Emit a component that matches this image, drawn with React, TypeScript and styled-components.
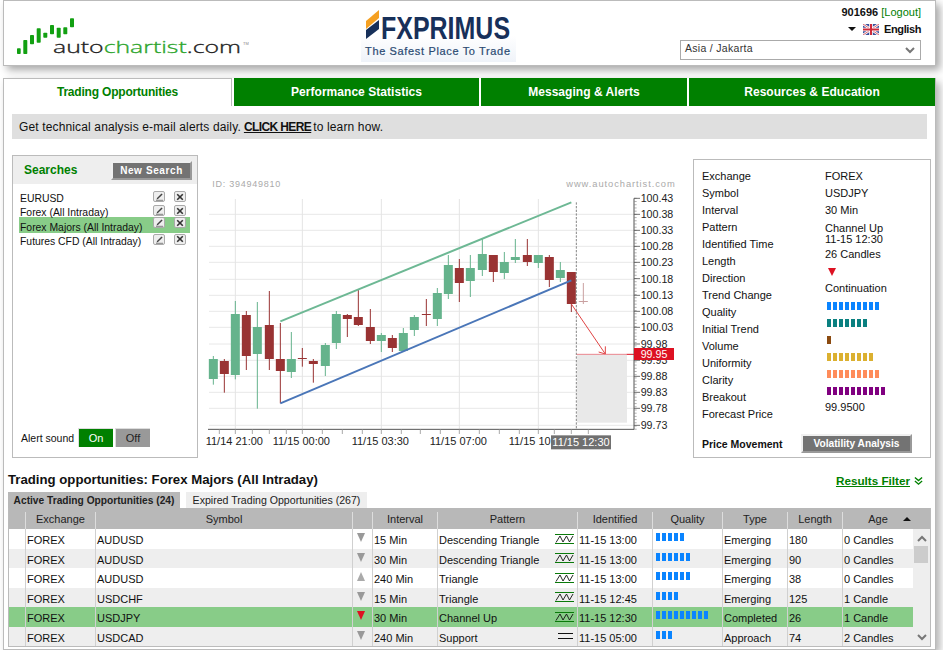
import React from 'react';
import styled, { createGlobalStyle } from 'styled-components';

const GlobalStyle = createGlobalStyle`
  html, body {
    margin: 0;
    padding: 0;
    background: #ffffff;
    overflow: hidden;
  }
  body {
    font-family: 'Liberation Sans', Arial, sans-serif;
    font-size: 11px;
    color: #111111;
  }
`;

const Page = styled.div`
  width: 933px;
  margin-left: 3px;
`;

// header
const Header = styled.header`
  height: 66px;
  box-sizing: border-box;
  border: 1px solid #bbbbbb;
  box-shadow: 4px 4px 8px rgba(0, 0, 0, 0.35);
  display: flex;
  background: #fff;
`;

const LogoSlot = styled.div`
  width: 357px;
  flex: none;
`;

const PartnerSlot = styled.div`
  width: 157px;
  flex: none;
`;

const Account = styled.div`
  flex: 1;
  display: flex;
  flex-direction: column;
  align-items: flex-end;
  padding: 5px 14px 0 0;
`;

const UserLine = styled.div`
  font-weight: bold;
  font-size: 11px;
  line-height: 13px;
  color: #111;
`;

const LogoutLink = styled.a`
  color: #008000;
  margin-left: 0;
  font-weight: normal;
`;

const LangLine = styled.div`
  display: flex;
  align-items: center;
  margin-top: 3px;
  height: 14px;
  font-weight: bold;
  font-size: 11px;
  letter-spacing: -0.4px;
`;

const DownCaret = styled.span`
  width: 0;
  height: 0;
  border-left: 4px solid transparent;
  border-right: 4px solid transparent;
  border-top: 4px solid #111;
  margin-right: 7px;
`;

const ZoneSelect = styled.div`
  width: 241px;
  height: 20px;
  box-sizing: border-box;
  margin-top: 4px;
  border: 1px solid #aaaaaa;
  display: flex;
  align-items: center;
  justify-content: space-between;
  padding: 0 5px 5px 4px;
  font-size: 10.5px;
  letter-spacing: 0.3px;
  color: #333;
`;

const ZoneChevron = styled.span`
  display: flex;
  margin-top: 6px;
`;

// main panel
const Main = styled.main`
  margin-top: 12px;
  height: 572px;
  box-sizing: border-box;
  border-left: 1px solid #bbbbbb;
  border-right: 1px solid #bbbbbb;
  border-bottom: 1px solid #bbbbbb;
  box-shadow: 4px 4px 8px rgba(0, 0, 0, 0.3);
`;

const NavBar = styled.nav`
  display: flex;
  height: 28px;
`;

const NavTab = styled.div<{ $width: number; $active?: boolean }>`
  width: ${p => p.$width}px;
  margin-right: 2px;
  box-sizing: border-box;
  display: flex;
  align-items: center;
  justify-content: center;
  font-size: 12px;
  font-weight: bold;
  background: ${p => (p.$active ? '#ffffff' : '#008000')};
  color: ${p => (p.$active ? '#008000' : '#ffffff')};
  border-top: ${p => (p.$active ? '1px solid #bbbbbb' : 'none')};
  border-right: ${p => (p.$active ? '1px solid #bbbbbb' : 'none')};
  padding-bottom: ${p => (p.$active ? '1px' : '0')};
  letter-spacing: ${p => (p.$active ? '-0.2px' : '0.04px')};
  &:last-child {
    margin-right: 0;
  }
`;

const Content = styled.div`
  padding: 8px 0 0 8px;
`;

const Banner = styled.div`
  width: 915px;
  height: 25px;
  background: #dfdfdf;
  display: flex;
  align-items: center;
  padding-left: 7px;
  box-sizing: border-box;
  font-size: 12px;
  letter-spacing: 0.14px;
  color: #111;
`;

const BannerLink = styled.a`
  font-weight: bold;
  text-decoration: underline;
  letter-spacing: -0.6px;
  color: #111;
  margin: 0 2px 0 3px;
`;

const MidRow = styled.div`
  display: flex;
  margin-top: 16px;
  height: 303px;
`;

// searches
const SearchPanel = styled.section`
  width: 186px;
  flex: none;
  box-sizing: border-box;
  border: 1px solid #bbbbbb;
  display: flex;
  flex-direction: column;
`;

const SearchHead = styled.div`
  height: 28px;
  background: #eeeeee;
  display: flex;
  align-items: center;
  justify-content: space-between;
  padding: 0 5px 0 11px;
  flex: none;
`;

const SearchTitle = styled.span`
  color: #008000;
  font-weight: bold;
  font-size: 12px;
`;

const GreyButton = styled.div<{ $width: number; $spaced?: boolean }>`
  width: ${p => p.$width}px;
  height: 19px;
  box-sizing: border-box;
  background: #737373;
  color: #ffffff;
  font-weight: bold;
  font-size: ${p => (p.$spaced ? '10px' : '10.2px')};
  letter-spacing: ${p => (p.$spaced ? '0.6px' : '0')};
  display: flex;
  align-items: center;
  justify-content: center;
  border: 2px solid;
  border-color: #f0f0f0 #999999 #999999 #f0f0f0;
`;

const SearchList = styled.div`
  padding: 7px 7px 0 6px;
  flex: 1;
`;

const SearchRow = styled.div<{ $active?: boolean }>`
  height: ${p => (p.$active ? '16px' : '14.3px')};
  margin: ${p => (p.$active ? '-2.6px 0 0.9px' : '0')};
  background: ${p => (p.$active ? '#88cc88' : 'transparent')};
  display: flex;
  align-items: ${p => (p.$active ? 'flex-end' : 'center')};
  padding-left: 1px;
  font-size: 10.4px;
`;

const SearchName = styled.span`
  flex: 1;
  white-space: nowrap;
`;

const RowButton = styled.span<{ $gap?: boolean }>`
  width: 12px;
  height: 11px;
  box-sizing: border-box;
  border: 1px solid #aaaaaa;
  border-radius: 2px;
  background: #eeeeee;
  display: flex;
  align-items: center;
  justify-content: center;
  margin-left: ${p => (p.$gap ? '9px' : '0')};
  margin-right: ${p => (p.$gap ? '4px' : '0')};
  align-self: flex-start;
`;

const SoundRow = styled.div`
  display: flex;
  align-items: center;
  padding: 0 0 10px 8px;
  font-size: 10.5px;
`;

const SoundLabel = styled.span`
  width: 57px;
`;

const SoundToggle = styled.span<{ $on?: boolean }>`
  width: 35px;
  height: 19px;
  box-sizing: border-box;
  margin-right: 2px;
  font-size: 11px;
  background: ${p => (p.$on ? '#008000' : '#999999')};
  color: ${p => (p.$on ? '#ffffff' : '#222222')};
  display: flex;
  align-items: center;
  justify-content: center;
  border-top: 1px solid #dddddd;
  border-left: 1px solid #dddddd;
`;

// chart
const ChartBox = styled.div`
  width: 490px;
  height: 290px;
  margin: 15px 3px 0 2px;
  flex: none;
  svg {
    display: block;
  }
`;

// info panel
const InfoPanel = styled.section`
  width: 238px;
  height: 299px;
  margin-top: 4px;
  flex: none;
  box-sizing: border-box;
  border: 1px solid #bbbbbb;
  padding: 8px 0 4px 8px;
  display: flex;
  flex-direction: column;
  font-size: 11px;
`;

const InfoColumns = styled.div`
  display: grid;
  grid-template-columns: 123px 1fr;
`;

const InfoLine = styled.div<{ $tight?: boolean; $before?: number }>`
  height: ${p => (p.$tight ? '10.5px' : '17px')};
  line-height: ${p => (p.$tight ? '10.5px' : '17px')};
  margin-top: ${p => p.$before || 0}px;
  display: flex;
  align-items: center;
  white-space: nowrap;
`;

const Direction = styled.span`
  width: 0;
  height: 0;
  margin-left: 3px;
  border-left: 4.5px solid transparent;
  border-right: 4.5px solid transparent;
  border-top: 8px solid #dd1122;
`;

const Meter = styled.span<{ $left?: number }>`
  display: flex;
  gap: 2px;
  margin-left: ${p => p.$left || 0}px;
`;

const MeterSeg = styled.i<{ $color: string }>`
  width: 4px;
  height: 8px;
  background: ${p => p.$color};
`;

const MoveRow = styled.div`
  margin-top: auto;
  display: flex;
  align-items: center;
  justify-content: space-between;
  padding-right: 18px;
`;

const MoveLabel = styled.span`
  font-weight: bold;
  font-size: 10.5px;
`;

// opportunities
const TitleRow = styled.div`
  display: flex;
  align-items: flex-end;
  justify-content: space-between;
  margin: 12px 0 0 -4px;
  width: 915px;
  height: 18px;
`;

const SectionTitle = styled.h2`
  margin: 0;
  font-size: 13.2px;
  line-height: 17px;
  font-weight: bold;
  color: #111;
`;

const FilterLink = styled.a`
  display: flex;
  align-items: center;
  gap: 4px;
  padding-bottom: 1px;
  font-size: 11.7px;
  font-weight: bold;
  color: #008000;
  span {
    text-decoration: underline;
  }
`;

const SubTabs = styled.div`
  display: flex;
  gap: 6px;
  margin: 4px 0 0 -4px;
  height: 16px;
`;

const SubTab = styled.div<{ $active?: boolean; $width: number }>`
  width: ${p => p.$width}px;
  background: ${p => (p.$active ? '#b8b8b8' : '#eeeeee')};
  font-weight: ${p => (p.$active ? 'bold' : 'normal')};
  color: #222;
  font-size: ${p => (p.$active ? '10.2px' : '10.6px')};
  display: flex;
  align-items: center;
  justify-content: center;
`;

const Table = styled.div`
  margin-left: -4px;
  width: 923px;
  box-sizing: border-box;
  border: 1px solid #bbbbbb;
  border-top: none;
`;

const COLS = '17px 70px 257px 20px 65px 140px 75px 70px 65px 55px 70px';

const HeadRow = styled.div`
  display: grid;
  grid-template-columns: ${COLS} 18px;
  height: 21px;
  background: #b8b8b8;
  padding-top: 4px;
  box-sizing: border-box;
`;

const HeadCell = styled.div`
  position: relative;
  border-right: 1px solid #dddddd;
  display: flex;
  align-items: center;
  justify-content: center;
  color: #222;
  padding-bottom: 3px;
  &:nth-child(n + 11) {
    border-right: none;
  }
`;

const SortArrow = styled.span`
  position: absolute;
  right: 2px;
  top: 5px;
  width: 0;
  height: 0;
  border-left: 4px solid transparent;
  border-right: 4px solid transparent;
  border-bottom: 4px solid #111;
`;

const TableBody = styled.div`
  display: flex;
`;

const Rows = styled.div`
  width: 904px;
  flex: none;
`;

const Row = styled.div<{ $bg: string }>`
  display: grid;
  grid-template-columns: ${COLS};
  height: 19.5px;
  background: ${p => p.$bg};
`;

const Cell = styled.div`
  box-sizing: border-box;
  border-right: 1px solid #d0d0d0;
  padding: 3px 0 0 1px;
  display: flex;
  align-items: center;
  justify-content: space-between;
  white-space: nowrap;
  overflow: hidden;
  &:last-child {
    border-right: none;
  }
`;

const Arrow = styled.span<{ $dir: string; $color: string }>`
  width: 0;
  height: 0;
  margin: -5px 0 0 3px;
  border-left: 4.5px solid transparent;
  border-right: 4.5px solid transparent;
  ${p => (p.$dir === 'up' ? 'border-bottom' : 'border-top')}: 9px solid ${p => p.$color};
`;

const RowMeter = styled.span`
  align-self: flex-start;
  margin-top: 1px;
`;

const ScrollBar = styled.div`
  flex: 1;
  background: #eeeeee;
  display: flex;
  flex-direction: column;
  align-items: center;
  justify-content: space-between;
  position: relative;
  padding: 6px 0 5px;
`;

const ScrollThumb = styled.div`
  position: absolute;
  left: 1px;
  right: 2px;
  top: 17px;
  height: 17px;
  background: #cccccc;
`;

const Chevron = ({ up, color = '#777777', size = 10 }: { up?: boolean; color?: string; size?: number }) => (
  <svg width={size} height={size * 0.7} viewBox="0 0 10 7" fill="none" stroke={color} strokeWidth="2">
    <path d={up ? 'M1 6 L5 2 L9 6' : 'M1 1 L5 5 L9 1'} />
  </svg>
);

const AutochartistLogo = () => (
  <svg width="245" height="64" viewBox="0 0 245 64">
    <g fill="#12a012">
      <rect x="13" y="47.3" width="3.7" height="5.7" rx="0.8" />
      <rect x="19.3" y="39" width="4" height="14" rx="0.8" />
      <rect x="26" y="34" width="4" height="9.3" rx="0.8" />
      <rect x="32.7" y="27.3" width="4" height="14.4" rx="0.8" />
      <rect x="39.3" y="31.7" width="4" height="5" rx="0.8" />
      <rect x="46" y="24" width="4" height="9.3" rx="0.8" />
      <rect x="52.7" y="26.7" width="4" height="10" rx="0.8" />
      <rect x="59.3" y="26.3" width="4" height="7" rx="0.8" />
      <rect x="66" y="17.3" width="4" height="9" rx="0.8" />
    </g>
    <text
      x="49"
      y="52"
      fontFamily="'Open Sans', sans-serif"
      fontSize="16"
      fontWeight="300"
      textLength="188"
      lengthAdjust="spacingAndGlyphs"
      fill="#222222"
      stroke="#222222"
      strokeWidth="0.3"
    >
      auto
      <tspan fill="#2ca52c" stroke="#2ca52c">chartist</tspan>
      .com
    </text>
    <text x="239" y="44" fontFamily="'Liberation Sans', sans-serif" fontSize="4" fill="#888888">TM</text>
  </svg>
);

const PrimusLogo = () => (
  <svg width="157" height="64" viewBox="0 0 157 64">
    <defs>
      <linearGradient id="fade" x1="0" y1="0" x2="0" y2="1">
        <stop offset="0" stopColor="#ffffff" />
        <stop offset="0.5" stopColor="#ffffff" />
        <stop offset="1" stopColor="#eff3f9" />
      </linearGradient>
    </defs>
    <rect x="0" y="8" width="155" height="53" fill="url(#fade)" />
    <path d="M5 20 L18 9 L18 17 L5 28 Z" fill="#f5a021" />
    <path d="M5 29 L18 19 L18 28 L5 38 Z" fill="#17305a" />
    <text
      transform="translate(20 38) scale(0.806 1)"
      fontFamily="'Liberation Sans', sans-serif"
      fontSize="31"
      fontWeight="bold"
      fill="#17305a"
    >
      FXPRIMUS
    </text>
    <text
      x="4"
      y="53.5"
      fontFamily="'Liberation Sans', sans-serif"
      fontSize="11"
      stroke="#2b4a72"
      strokeWidth="0.2"
      textLength="145"
      fill="#2b4a72"
    >
      The Safest Place To Trade
    </text>
  </svg>
);

const UkFlag = () => (
  <svg width="16" height="11" viewBox="0 0 16 11" style={{ marginRight: 5 }}>
    <rect width="16" height="11" fill="#3b4f9a" />
    <path d="M0 0 L16 11 M16 0 L0 11" stroke="#ffffff" strokeWidth="2.4" />
    <path d="M0 0 L16 11 M16 0 L0 11" stroke="#cf3a4a" strokeWidth="0.8" />
    <path d="M8 0 V11 M0 5.5 H16" stroke="#ffffff" strokeWidth="3.6" />
    <path d="M8 0 V11 M0 5.5 H16" stroke="#cf2a3a" strokeWidth="2" />
  </svg>
);

const EditIcon = () => (
  <svg width="9" height="9" viewBox="0 0 9 9">
    <path d="M2 6 L6.5 1.5 L7.6 2.6 L3 7 L1.6 7.4 Z" fill="#444444" />
    <path d="M1 8.3 H8" stroke="#666666" strokeWidth="0.8" />
  </svg>
);

const CloseIcon = () => (
  <svg width="8" height="8" viewBox="0 0 8 8">
    <path d="M1.2 1.2 L6.8 6.8 M6.8 1.2 L1.2 6.8" stroke="#333333" strokeWidth="1.6" />
  </svg>
);

const PatternIcon = ({ flat }: { flat?: boolean }) =>
  flat ? (
    <svg width="19" height="9" viewBox="0 0 19 9" style={{ marginRight: 3, marginTop: -3 }}>
      <path d="M3 1.5 H18 M3 6.5 H18" stroke="#111111" strokeWidth="1" />
    </svg>
  ) : (
    <svg width="19" height="10" viewBox="0 0 19 10" style={{ marginRight: 3, marginTop: -3 }}>
      <path d="M0 0.5 H19 M0 9.5 H19" stroke="#0a7a0a" strokeWidth="1" />
      <path d="M1 8.5 L5 2 L8 8 L11.5 2 L14.5 8 L18 2" stroke="#111111" strokeWidth="0.9" fill="none" />
    </svg>
  );

// chart drawn in 3x units, origin at page (200,170)
type Candle = [number, number, number, number, number, 'g' | 'r' | 'f'];

const candles: Candle[] = [
  [40, 567, 627, 558, 644, 'g'],
  [73, 573, 612, 567, 668, 'r'],
  [106, 432, 615, 393, 628, 'g'],
  [139, 435, 558, 423, 600, 'r'],
  [172, 471, 552, 396, 716, 'g'],
  [208, 465, 567, 363, 600, 'r'],
  [241, 567, 603, 459, 700, 'r'],
  [274, 567, 606, 486, 624, 'g'],
  [307, 564, 567, 534, 590, 'r'],
  [340, 573, 582, 567, 638, 'r'],
  [376, 525, 588, 519, 618, 'g'],
  [409, 432, 519, 423, 537, 'g'],
  [442, 435, 447, 432, 501, 'r'],
  [475, 441, 465, 358, 468, 'r'],
  [511, 471, 513, 417, 522, 'r'],
  [544, 495, 513, 489, 546, 'g'],
  [577, 504, 534, 495, 546, 'r'],
  [610, 489, 543, 474, 546, 'g'],
  [643, 441, 480, 435, 498, 'g'],
  [679, 432, 435, 387, 468, 'r'],
  [712, 369, 447, 354, 468, 'g'],
  [745, 285, 372, 255, 387, 'g'],
  [778, 294, 339, 267, 396, 'r'],
  [811, 294, 333, 255, 381, 'g'],
  [847, 252, 300, 207, 318, 'g'],
  [880, 255, 306, 255, 336, 'r'],
  [913, 276, 309, 246, 327, 'g'],
  [946, 261, 270, 207, 279, 'g'],
  [982, 255, 276, 207, 288, 'r'],
  [1015, 255, 279, 255, 294, 'g'],
  [1048, 261, 330, 255, 351, 'r'],
  [1081, 300, 324, 276, 336, 'g'],
  [1114, 306, 402, 306, 426, 'r'],
  [1150, 393, 396, 339, 402, 'f'],
];

const candleColor = { g: '#65b38c', r: '#993333', f: '#c9a0a0' };

const priceLabels: [string, number][] = [
  ['100.43', 85],
  ['100.38', 133],
  ['100.33', 181],
  ['100.28', 229],
  ['100.23', 277],
  ['100.18', 326],
  ['100.13', 376],
  ['100.08', 424],
  ['100.03', 472],
  ['99.98', 522],
  ['99.93', 571],
  ['99.88', 619],
  ['99.83', 667],
  ['99.78', 715],
  ['99.73', 766],
];

const gridY = [133, 181, 229, 277, 328, 376, 424, 472, 522, 571, 619, 667, 715, 766];
const gridX = [106, 307, 544, 778, 1015];
const tickX = [58, 106, 157, 208, 259, 307, 367, 427, 487, 544, 604, 661, 721, 778, 838, 898, 958, 1015, 1063, 1114, 1165];

const timeLabels: [string, number][] = [
  ['11/14 21:00', 103],
  ['11/15 00:00', 304],
  ['11/15 03:30', 541],
  ['11/15 07:00', 775],
  ['11/15 10:00', 1012],
];

const PriceChart = () => {
  const minor: number[] = [];
  for (let y = 85; y < 778; y += 9.62) minor.push(y);
  return (
    <svg width="490" height="290" viewBox="0 0 1470 870" fontFamily="'Liberation Sans', sans-serif">
      {gridY.map(y => (
        <line key={y} x1="27" x2="1302" y1={y} y2={y} stroke="#e8e8e8" strokeWidth="3" />
      ))}
      {gridX.map(x => (
        <line key={x} x1={x} x2={x} y1="87" y2="778" stroke="#e4e4e4" strokeWidth="3" />
      ))}
      <rect x="1131" y="553" width="150" height="205" fill="#e9e9e9" />
      {candles.map(([x, top, bottom, wt, wb, c]) => (
        <g key={x} fill={candleColor[c]}>
          <rect x={x - 1.5} y={wt} width="3" height={wb - wt} />
          <rect x={x - 13.5} y={top} width="27" height={bottom - top} />
        </g>
      ))}
      <line x1="241" y1="454" x2="1114" y2="97" stroke="#6db894" strokeWidth="6" />
      <line x1="241" y1="700" x2="1114" y2="331" stroke="#4a76b8" strokeWidth="6" />
      <line x1="1129" y1="97" x2="1129" y2="778" stroke="#666666" strokeWidth="2.4" strokeDasharray="7 4" />
      <path d="M1114 402 L1216 552 M1216 552 L1216 529 M1216 552 L1196 546" fill="none" stroke="#e04444" strokeWidth="3" />
      <line x1="1130" y1="553" x2="1280" y2="553" stroke="#e8707a" strokeWidth="2.5" />
      <line x1="1280" y1="553" x2="1302" y2="553" stroke="#dd1122" strokeWidth="3" />
      <line x1="24" x2="1302" y1="778" y2="778" stroke="#555555" strokeWidth="3" />
      <line x1="1302" x2="1302" y1="85" y2="778" stroke="#555555" strokeWidth="3" />
      {tickX.map(x => (
        <line key={x} x1={x} x2={x} y1="778" y2="792" stroke="#999999" strokeWidth="2.5" />
      ))}
      {minor.map(y => (
        <line key={y} x1="1302" x2="1310" y1={y} y2={y} stroke="#888888" strokeWidth="2" />
      ))}
      {priceLabels.map(([t, y]) => (
        <g key={t}>
          <line x1="1302" x2="1320" y1={y} y2={y} stroke="#555555" strokeWidth="2.5" />
          <text x="1322" y={y + 12} fontSize="32" fill="#222222">{t}</text>
        </g>
      ))}
      <rect x="1302" y="534" width="120" height="36" fill="#dd1122" />
      <text x="1362" y="564" fontSize="32" fill="#ffffff" textAnchor="middle">99.95</text>
      {timeLabels.map(([t, x]) => (
        <text key={t} x={x} y="825" fontSize="33" fill="#222222" textAnchor="middle">{t}</text>
      ))}
      <rect x="1053" y="796" width="180" height="42" fill="#707070" />
      <text x="1143" y="828" fontSize="33" fill="#ffffff" textAnchor="middle">11/15 12:30</text>
      <text x="37" y="52" fontSize="27" letterSpacing="2.2" fill="#aaaaaa">ID: 394949810</text>
      <text x="1427" y="52" fontSize="28" letterSpacing="2.8" fill="#aaaaaa" textAnchor="end">www.autochartist.com</text>
    </svg>
  );
};

const QuietMeter = ({ count, color, left }: { count: number; color: string; left?: number }) => (
  <Meter $left={left}>
    {Array.from({ length: count }).map((_, i) => (
      <MeterSeg key={i} $color={color} />
    ))}
  </Meter>
);

const searches = ['EURUSD', 'Forex (All Intraday)', 'Forex Majors (All Intraday)', 'Futures CFD (All Intraday)'];

const infoLabels = [
  'Exchange',
  'Symbol',
  'Interval',
  'Pattern',
  'Identified Time',
  'Length',
  'Direction',
  'Trend Change',
  'Quality',
  'Initial Trend',
  'Volume',
  'Uniformity',
  'Clarity',
  'Breakout',
  'Forecast Price',
];

const rows = [
  { sym: 'AUDUSD', dir: 'down', color: '#999999', interval: '15 Min', pattern: 'Descending Triangle', id: '11-15 13:00', q: 5, type: 'Emerging', len: '180', age: '0 Candles', bg: '#ffffff' },
  { sym: 'AUDUSD', dir: 'down', color: '#999999', interval: '30 Min', pattern: 'Descending Triangle', id: '11-15 13:00', q: 6, type: 'Emerging', len: '90', age: '0 Candles', bg: '#eeeeee' },
  { sym: 'AUDUSD', dir: 'up', color: '#aaaaaa', interval: '240 Min', pattern: 'Triangle', id: '11-15 13:00', q: 6, type: 'Emerging', len: '38', age: '0 Candles', bg: '#ffffff' },
  { sym: 'USDCHF', dir: 'down', color: '#999999', interval: '15 Min', pattern: 'Triangle', id: '11-15 12:45', q: 4, type: 'Emerging', len: '125', age: '1 Candle', bg: '#eeeeee' },
  { sym: 'USDJPY', dir: 'down', color: '#dd1122', interval: '30 Min', pattern: 'Channel Up', id: '11-15 12:30', q: 9, type: 'Completed', len: '26', age: '1 Candle', bg: '#88cc88' },
  { sym: 'USDCAD', dir: 'down', color: '#999999', interval: '240 Min', pattern: 'Support', id: '11-15 05:00', q: 3, type: 'Approach', len: '74', age: '2 Candles', bg: '#eeeeee', flat: true },
];

const App: React.FC = () => (
  <Page>
    <GlobalStyle />
    <Header>
      <LogoSlot>
        <AutochartistLogo />
      </LogoSlot>
      <PartnerSlot>
        <PrimusLogo />
      </PartnerSlot>
      <Account>
        <UserLine>
          901696 <LogoutLink>[Logout]</LogoutLink>
        </UserLine>
        <LangLine>
          <DownCaret />
          <UkFlag />
          English
        </LangLine>
        <ZoneSelect>
          Asia / Jakarta
          <ZoneChevron><Chevron /></ZoneChevron>
        </ZoneSelect>
      </Account>
    </Header>

    <Main>
      <NavBar>
        <NavTab $width={228} $active>Trading Opportunities</NavTab>
        <NavTab $width={245}>Performance Statistics</NavTab>
        <NavTab $width={206}>Messaging &amp; Alerts</NavTab>
        <NavTab $width={246}>Resources &amp; Education</NavTab>
      </NavBar>

      <Content>
        <Banner>
          Get technical analysis e-mail alerts daily.
          <BannerLink>CLICK HERE</BannerLink>
          to learn how.
        </Banner>

        <MidRow>
          <SearchPanel>
            <SearchHead>
              <SearchTitle>Searches</SearchTitle>
              <GreyButton $width={81} $spaced>New Search</GreyButton>
            </SearchHead>
            <SearchList>
              {searches.map((s, i) => (
                <SearchRow key={s} $active={i === 2}>
                  <SearchName>{s}</SearchName>
                  <RowButton><EditIcon /></RowButton>
                  <RowButton $gap><CloseIcon /></RowButton>
                </SearchRow>
              ))}
            </SearchList>
            <SoundRow>
              <SoundLabel>Alert sound</SoundLabel>
              <SoundToggle $on>On</SoundToggle>
              <SoundToggle>Off</SoundToggle>
            </SoundRow>
          </SearchPanel>

          <ChartBox>
            <PriceChart />
          </ChartBox>

          <InfoPanel>
            <InfoColumns>
              <div>
                {infoLabels.map(l => (
                  <InfoLine key={l}>{l}</InfoLine>
                ))}
              </div>
              <div>
                <InfoLine>FOREX</InfoLine>
                <InfoLine>USDJPY</InfoLine>
                <InfoLine>30 Min</InfoLine>
                <InfoLine $tight $before={4}>Channel Up</InfoLine>
                <InfoLine $tight>11-15 12:30</InfoLine>
                <InfoLine $before={2}>26 Candles</InfoLine>
                <InfoLine><Direction /></InfoLine>
                <InfoLine>Continuation</InfoLine>
                <InfoLine><QuietMeter count={9} color="#0a84ff" left={2} /></InfoLine>
                <InfoLine><QuietMeter count={7} color="#0a8080" left={2} /></InfoLine>
                <InfoLine><QuietMeter count={1} color="#8b4a10" left={2} /></InfoLine>
                <InfoLine><QuietMeter count={8} color="#dbb030" left={2} /></InfoLine>
                <InfoLine><QuietMeter count={9} color="#ff8c5a" left={2} /></InfoLine>
                <InfoLine><QuietMeter count={10} color="#800080" left={2} /></InfoLine>
                <InfoLine>99.9500</InfoLine>
              </div>
            </InfoColumns>
            <MoveRow>
              <MoveLabel>Price Movement</MoveLabel>
              <GreyButton $width={111}>Volatility Analysis</GreyButton>
            </MoveRow>
          </InfoPanel>
        </MidRow>

        <TitleRow>
          <SectionTitle>Trading opportunities: Forex Majors (All Intraday)</SectionTitle>
          <FilterLink>
            <span>Results Filter</span>
            <svg width="9" height="10" viewBox="0 0 10 10" fill="none" stroke="#008000" strokeWidth="1.5">
              <path d="M1 1 L5 4.5 L9 1 M1 5 L5 8.5 L9 5" />
            </svg>
          </FilterLink>
        </TitleRow>
        <SubTabs>
          <SubTab $active $width={172}>Active Trading Opportunities (24)</SubTab>
          <SubTab $width={181}>Expired Trading Opportunities (267)</SubTab>
        </SubTabs>
        <Table>
          <HeadRow>
            <HeadCell />
            <HeadCell>Exchange</HeadCell>
            <HeadCell>Symbol</HeadCell>
            <HeadCell />
            <HeadCell>Interval</HeadCell>
            <HeadCell>Pattern</HeadCell>
            <HeadCell>Identified</HeadCell>
            <HeadCell>Quality</HeadCell>
            <HeadCell>Type</HeadCell>
            <HeadCell>Length</HeadCell>
            <HeadCell>Age<SortArrow /></HeadCell>
            <HeadCell />
          </HeadRow>
          <TableBody>
            <Rows>
              {rows.map((r, i) => (
                <Row key={i} $bg={r.bg}>
                  <Cell />
                  <Cell>FOREX</Cell>
                  <Cell>{r.sym}</Cell>
                  <Cell><Arrow $dir={r.dir} $color={r.color} /></Cell>
                  <Cell>{r.interval}</Cell>
                  <Cell>
                    {r.pattern}
                    <PatternIcon flat={r.flat} />
                  </Cell>
                  <Cell>{r.id}</Cell>
                  <Cell>
                    <RowMeter>
                      <QuietMeter count={r.q} color="#0a84ff" left={2} />
                    </RowMeter>
                  </Cell>
                  <Cell>{r.type}</Cell>
                  <Cell>{r.len}</Cell>
                  <Cell>{r.age}</Cell>
                </Row>
              ))}
            </Rows>
            <ScrollBar>
              <Chevron up />
              <ScrollThumb />
              <Chevron />
            </ScrollBar>
          </TableBody>
        </Table>
      </Content>
    </Main>
  </Page>
);

export default App;
